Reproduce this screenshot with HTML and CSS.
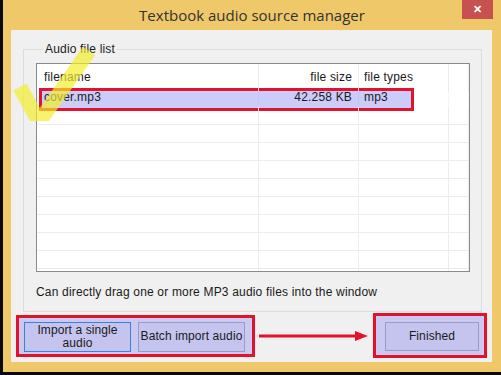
FILE: index.html
```html
<!DOCTYPE html>
<html lang="en">
<head>
  <meta charset="UTF-8">
  <meta name="viewport" content="width=device-width, initial-scale=1.0">
  <title>Textbook audio source manager</title>
  <link rel="stylesheet" href="styles.css">
</head>
<body>
  <div class="window">
    <div class="titlebar">
      <span></span>
      <span class="title">Textbook audio source manager</span>
      <span class="close">&#x2715;</span>
    </div>
    <div class="client">
      <fieldset class="group">
        <legend>Audio file list</legend>
        <div class="list">
          <div class="list-body">
            <div class="row head">
              <div class="cell">filename</div>
              <div class="cell num">file size</div>
              <div class="cell">file types</div>
              <div class="cell"></div>
            </div>
            <div class="row selected">
              <div class="cell">cover.mp3</div>
              <div class="cell num">42.258 KB</div>
              <div class="cell">mp3</div>
              <div class="cell"></div>
            </div>
            <div class="row"><div class="cell"></div><div class="cell"></div><div class="cell"></div><div class="cell"></div></div>
            <div class="row"><div class="cell"></div><div class="cell"></div><div class="cell"></div><div class="cell"></div></div>
            <div class="row"><div class="cell"></div><div class="cell"></div><div class="cell"></div><div class="cell"></div></div>
            <div class="row"><div class="cell"></div><div class="cell"></div><div class="cell"></div><div class="cell"></div></div>
            <div class="row"><div class="cell"></div><div class="cell"></div><div class="cell"></div><div class="cell"></div></div>
            <div class="row"><div class="cell"></div><div class="cell"></div><div class="cell"></div><div class="cell"></div></div>
            <div class="row"><div class="cell"></div><div class="cell"></div><div class="cell"></div><div class="cell"></div></div>
            <div class="row"><div class="cell"></div><div class="cell"></div><div class="cell"></div><div class="cell"></div></div>
            <div class="row"><div class="cell"></div><div class="cell"></div><div class="cell"></div><div class="cell"></div></div>
            <div class="row"><div class="cell"></div><div class="cell"></div><div class="cell"></div><div class="cell"></div></div>
          </div>
          <div class="mark"></div>
          <svg class="check" width="120" height="120" viewBox="0 0 120 120">
            <polyline points="19,86 38,121 88,50" fill="none" stroke="rgba(245,238,40,0.68)" stroke-width="15"/>
          </svg>
        </div>
        <p class="hint">Can directly drag one or more MP3 audio files into the window</p>
      </fieldset>
      <div class="actions">
        <div class="callout callout-left">
          <button class="btn focused">Import a single audio</button>
          <button class="btn">Batch import audio</button>
        </div>
        <svg class="arrow" width="118" height="14" viewBox="0 0 118 14">
          <line x1="4" y1="7" x2="104" y2="7" stroke="#e2122c" stroke-width="3"/>
          <polygon points="100,2 113,7 100,12" fill="#e2122c"/>
        </svg>
        <div class="callout callout-right">
          <button class="btn finish">Finished</button>
        </div>
      </div>
    </div>
  </div>
</body>
</html>
```

FILE: styles.css
```css
html, body {
  margin: 0;
  padding: 0;
}
body {
  width: 501px;
  height: 375px;
  overflow: hidden;
  font-family: "Liberation Sans", Arial, sans-serif;
  font-size: 12px;
  letter-spacing: 0.18px;
  color: #1a1a1a;
}
.window {
  box-sizing: border-box;
  width: 501px;
  height: 375px;
  background-color: #efc86a;
  border-left: 3px solid #0a0a0a;
  border-bottom: 3px solid #0a0a0a;
  padding: 0 9px 10px 8px;
}
.titlebar {
  height: 30px;
  margin: 0 -9px 0 -8px;
  display: grid;
  grid-template-columns: 1fr auto 1fr;
  align-items: start;
}
.title {
  font-family: "Open Sans", "Liberation Sans", sans-serif;
  font-size: 15px;
  letter-spacing: 0;
  color: #333;
  line-height: 30px;
}
.close {
  justify-self: end;
  margin-right: 8px;
  width: 31px;
  height: 19px;
  background-color: #c75050;
  color: #fff;
  font-size: 11px;
  font-weight: bold;
  line-height: 19px;
  text-align: center;
}
.client {
  height: 332px;
  background-color: #f0f0f0;
  padding-top: 12px;
  box-sizing: border-box;
}
.group {
  margin: 0 0 0 12px;
  width: 458px;
  box-sizing: border-box;
  border: 1px solid #dcdcdc;
  padding: 7px 11px 0 12px;
}
.group legend {
  margin-left: 7px;
  padding: 0 2px;
  line-height: 14px;
}
.list {
  position: relative;
  width: 434px;
  height: 209px;
  box-sizing: border-box;
  border: 1px solid #868a92;
  background-color: #fff;
}
.list-body {
  position: relative;
  z-index: 1;
  height: 100%;
  overflow: hidden;
}
.row {
  display: grid;
  grid-template-columns: 222px 100px 90px 20px;
  height: 18px;
  box-sizing: border-box;
  border-bottom: 1px solid #ececec;
}
.row.head {
  height: 25px;
  border-bottom: none;
}
.row.selected {
  border-bottom-color: transparent;
}
.cell {
  border-right: 1px solid #ececec;
  padding: 0 6px 0 7px;
  line-height: 17px;
  white-space: nowrap;
}
.row.selected .cell {
  border-right-color: rgba(0, 0, 0, 0.04);
}
.row.head .cell {
  line-height: 27px;
}
.cell:nth-child(3) {
  padding-left: 5px;
}
.cell.num {
  text-align: right;
}
.mark {
  position: absolute;
  left: 2px;
  top: 24px;
  width: 375px;
  height: 23px;
  box-sizing: border-box;
  border: 3px solid #e2122c;
  background-color: #ccccf8;
}
.check {
  position: absolute;
  left: -36px;
  top: -63px;
  z-index: 2;
}
.hint {
  margin: 13px 0 0 0;
  padding-bottom: 12px;
  line-height: 14px;
}
.actions {
  display: flex;
  align-items: center;
  margin-top: 1px;
  padding-left: 5px;
}
.callout {
  display: flex;
  gap: 7px;
  box-sizing: border-box;
  border: 3px solid #e2122c;
  background-color: #c9c9f2;
}
.callout-left {
  width: 239px;
  height: 42px;
  padding: 4px 0 0 5px;
}
.callout-right {
  width: 114px;
  height: 45px;
  padding: 6px 0 0 9px;
}
.btn {
  width: 107px;
  height: 30px;
  padding: 0;
  box-sizing: border-box;
  border: 1px solid #9a9ac6;
  background-color: #c4c4ef;
  font-family: "Liberation Sans", Arial, sans-serif;
  font-size: 12px;
  letter-spacing: 0.1px;
  line-height: 13px;
  color: #1a1a1a;
}
.btn.focused {
  border-color: #3d80dc;
  padding: 0 12px;
}
.btn.finish {
  width: 94px;
  height: 29px;
}
.arrow {
  display: block;
  flex: none;
}
```
